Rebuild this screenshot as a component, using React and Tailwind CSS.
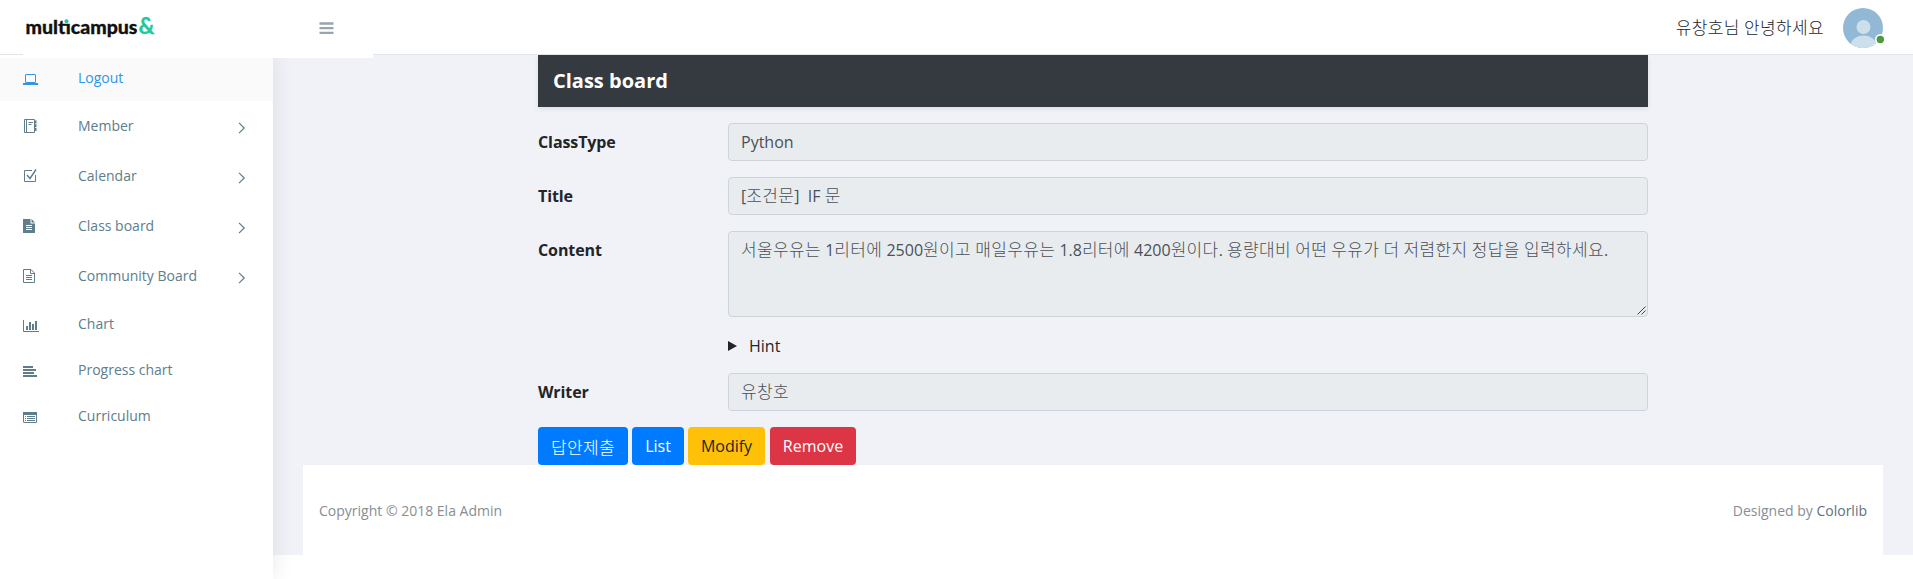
import React from "react";

/* Splits a string so Hangul runs get their own size and tracking. */
function Ko({ children }) {
  return children.split(/([\uac00-\ud7a3]+)/).map((part, i) =>
    /[\uac00-\ud7a3]/.test(part) ? (
      <span key={i} className="font-['Noto_Sans_CJK_KR',sans-serif] text-[17px] font-light leading-none tracking-[0.36px]">{part}</span>
    ) : (
      <span key={i}>{part}</span>
    )
  );
}

const Svg = ({ children, w = 16, h = 16 }) => (
  <svg width={w} height={h} viewBox={`0 0 ${w} ${h}`} fill="none" stroke="currentColor" strokeWidth="1" className="block shrink-0">
    {children}
  </svg>
);

const icons = {
  laptop: (
    <Svg>
      <rect x="2.5" y="2.5" width="10" height="8" rx="0.5" />
      <path d="M0 12h15" strokeWidth="2" />
    </Svg>
  ),
  book: (
    <Svg>
      <path d="M1.5 1.5h10v13h-10zM3.5 1.5v13M5.5 4.5h4.500M5.500 6.500h3" />
      <path d="M12.7 2.500v11.500" strokeWidth="1.600" strokeDasharray="3 0.8" />
    </Svg>
  ),
  check: (
    <Svg>
      <path d="M9 2.500H1.500V13.500H12.500V7" />
      <path d="M4 7l3 3.500L13 1.500" strokeWidth="1.400" />
    </Svg>
  ),
  fileSolid: (
    <Svg>
      <path d="M0 1h7.500v4.500h4.500v9.500H0z M8.500 1l3.500 3.500H8.500z" fill="currentColor" stroke="none" />
      <path d="M3 7.500h6M3 9.500h6M3 11.500h6" stroke="#fff" />
    </Svg>
  ),
  file: (
    <Svg>
      <path d="M0.500 1.500h7.500l3.500 3.500v9.500H0.500zM7.500 1.500v4h4M3 7.500h6M3 9.500h6M3 11.500h6" />
    </Svg>
  ),
  bars: (
    <Svg>
      <path d="M0.500 2v11.500H16" />
      <path d="M4 12V8M7 12V4M10 12V6M13 12V3" strokeWidth="2" />
    </Svg>
  ),
  align: (
    <Svg>
      <path d="M0 3h10M0 6h13M0 9h11M0 12h14" strokeWidth="2" />
    </Svg>
  ),
  list: (
    <Svg>
      <rect x="0.500" y="2.500" width="13" height="10" rx="0.500" />
      <path d="M0 3.500h14" strokeWidth="3" />
      <path d="M2 6.500h1M4 6.500h8M2 8.500h1M4 8.500h8M2 10.500h1M4 10.500h8" />
    </Svg>
  ),
};

const menu = [
  { label: "Logout", icon: "laptop", active: true, row: "h-[43px] pb-[3px]", ico: "mt-[3px]" },
  { label: "Member", icon: "book", arrow: true, row: "h-[50px]", ico: "" },
  { label: "Calendar", icon: "check", arrow: true, row: "h-[50px]", ico: "" },
  { label: "Class board", icon: "fileSolid", arrow: true, row: "h-[50px]", ico: "" },
  { label: "Community Board", icon: "file", arrow: true, row: "h-[50px]", ico: "" },
  { label: "Chart", icon: "bars", row: "h-[46px]", ico: "mt-[3px]" },
  { label: "Progress chart", icon: "align", row: "h-[46px]", ico: "mt-[3px]" },
  { label: "Curriculum", icon: "list", row: "h-[46px]", ico: "mt-[3px]" },
];

function Logo() {
  return (
    <svg width="132" height="34" viewBox="0 0 132 34" className="block" fontFamily="Lato, sans-serif" fontWeight="900">
      <text x="-0.500" y="24" fontSize="19.500" textLength="112" lengthAdjust="spacingAndGlyphs" fill="#111" stroke="#111" strokeWidth="0.300">multıcampus</text>
      <circle cx="40.500" cy="11.300" r="2" fill="#1fc998" />
      <text x="112.500" y="24.300" fontSize="22" fontWeight="700" textLength="16" lengthAdjust="spacingAndGlyphs" fill="#1fc998" stroke="#1fc998" strokeWidth="0.300">&amp;</text>
    </svg>
  );
}

function Sidebar() {
  return (
    <aside className="relative z-10 flex w-[273px] shrink-0 flex-col bg-white pt-[3px] shadow-[2px_0_20px_rgba(0,0,0,0.08)]">
      {menu.map((m) => (
        <div key={m.label} className={`flex items-center pl-[23px] pr-[27px] text-sm ${m.row} ${m.active ? "bg-[#fafafa] text-[#2f96e8]" : "text-[#607d8b]"}`}>
          <span className={`w-[55px] ${m.ico}`}>{icons[m.icon]}</span>
          <span className="flex-1">{m.label}</span>
          {m.arrow && (
            <svg width="8" height="12" viewBox="0 0 8 12" fill="none" stroke="currentColor" strokeWidth="1.200" className="mt-[4px]">
              <path d="M1 0.800L6.200 6L1 11.200" />
            </svg>
          )}
        </div>
      ))}
    </aside>
  );
}

function Field({ label, children, className = "" }) {
  return (
    <div className={`flex ${className}`}>
      <div className="w-[190px] pt-[7px] font-bold tracking-[-0.1px] text-[#212529]">{label}</div>
      <div className="min-w-0 flex-1">{children}</div>
    </div>
  );
}

const box = "rounded-[4px] border border-[#ced4da] bg-[#e9ecef] px-3 text-[#495057] whitespace-pre";

export default function App() {
  return (
    <div className="flex h-[579px] w-full flex-col overflow-hidden bg-white font-['Open_Sans','Noto_Sans_CJK_KR',sans-serif] text-base leading-6">
      <header className="relative z-20 flex h-[55px] shrink-0 items-start border-b border-[#e3e4e8] bg-white">
        <div className="ml-[23px] flex h-[58px] w-[350px] shrink-0 bg-white pl-[3px] pt-[10px]">
          <Logo />
          <svg width="15" height="12" viewBox="0 0 15 12" className="ml-[161px] mt-[12px]" stroke="#99a5ad" strokeWidth="2.300">
            <path d="M0.500 1.500h14M0.500 6.200h14M0.500 10.850h14" />
          </svg>
        </div>
        <div className="ml-auto flex items-center pr-[29px] pt-2">
          <span className="mr-[19px] whitespace-pre text-[#212529]"><Ko>유창호님 안녕하세요</Ko></span>
          <svg width="41" height="40" viewBox="0 0 41 40" className="block">
            <defs>
              <clipPath id="avatar"><circle cx="20" cy="20" r="20" /></clipPath>
            </defs>
            <g clipPath="url(#avatar)">
              <rect width="40" height="40" fill="#91b9d6" />
              <circle cx="20.500" cy="19" r="7" fill="#cddfea" />
              <ellipse cx="20.500" cy="38" rx="13" ry="10.500" fill="#cddfea" />
            </g>
            <circle cx="37.500" cy="31.500" r="5.500" fill="#fff" />
            <circle cx="37.300" cy="31.500" r="3.700" fill="#4a9b3f" />
          </svg>
        </div>
      </header>
      <div className="flex min-h-0 flex-1">
        <Sidebar />
        <main className="flex h-[500px] flex-1 flex-col bg-[#f1f2f7] px-[30px]">
          <div className="mx-auto flex h-[410px] w-[1110px] shrink-0 flex-col">
            <div className="mb-4 flex h-[52px] shrink-0 items-center bg-[#343a40] px-[15px] text-xl font-bold text-white shadow-[0_2px_5px_rgba(0,0,0,0.08)]">Class board</div>
            <Field label="ClassType" className="mb-4"><div className={`${box} h-[38px] py-[6px]`}>Python</div></Field>
            <Field label="Title" className="mb-4"><div className={`${box} h-[38px] py-[6px]`}><Ko>{"[조건문]  IF 문"}</Ko></div></Field>
            <Field label="Content" className="mb-4">
              <div className={`${box} flex h-[86px] items-start justify-between py-[6px] pr-[1px]`}>
                <span><Ko>서울우유는 1리터에 2500원이고 매일우유는 1.8리터에 4200원이다. 용량대비 어떤 우유가 더 저렴한지 정답을 입력하세요.</Ko></span>
                <svg width="9" height="9" viewBox="0 0 9 9" stroke="#444" strokeWidth="1" className="mb-[-5px] self-end">
                  <path d="M0.500 8.500l8-8M4.500 8.500l4-4" />
                </svg>
              </div>
            </Field>
            <Field label="" className="mb-[15px]">
              <div className="flex h-[25px] items-center text-[#212529]">
                <svg width="9" height="10" viewBox="0 0 9 10" className="mr-[12px]"><path d="M0 0l9 5l-9 5z" fill="#212529" /></svg>
                Hint
              </div>
            </Field>
            <Field label="Writer" className="mb-4"><div className={`${box} h-[38px] py-[6px]`}><Ko>유창호</Ko></div></Field>
            <div className="flex h-[38px] gap-1 text-white">
              <div className="flex w-[90px] items-center justify-center rounded-[4px] bg-[#007bff]"><Ko>답안제출</Ko></div>
              <div className="flex w-[52px] items-center justify-center rounded-[4px] bg-[#007bff]">List</div>
              <div className="flex w-[77px] items-center justify-center rounded-[4px] bg-[#ffc107] text-[#212529]">Modify</div>
              <div className="ml-[1px] flex w-[86px] items-center justify-center rounded-[4px] bg-[#dc3545]">Remove</div>
            </div>
          </div>
          <footer className="flex h-[90px] shrink-0 items-center justify-between bg-white px-4 pt-[2px] text-sm text-[#868e96]">
            <span>Copyright © 2018 Ela Admin</span>
            <span>Designed by <span className="text-[#607080]">Colorlib</span></span>
          </footer>
        </main>
      </div>
    </div>
  );
}
